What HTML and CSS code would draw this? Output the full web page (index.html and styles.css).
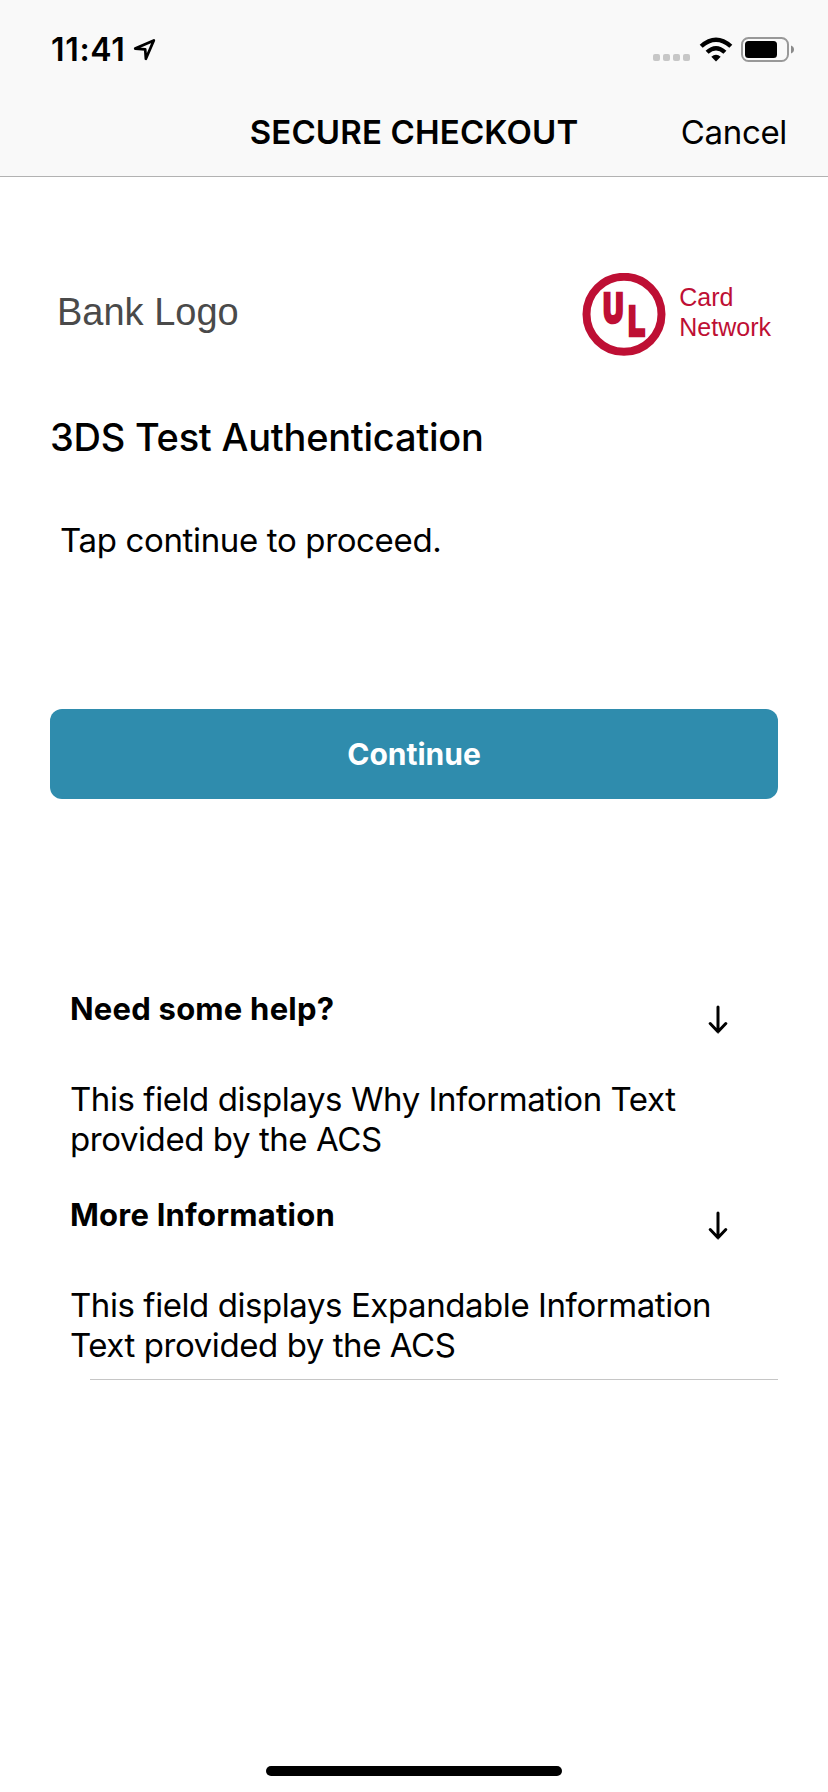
FILE: index.html
```html
<!DOCTYPE html>
<html lang="en">
<head>
<meta charset="utf-8">
<title>Secure Checkout</title>
<link rel="stylesheet" href="styles.css">
</head>
<body>
<div class="screen">
  <header class="header">
    <div class="status">
      <span class="time">11:41</span>
      <svg class="location" width="24" height="24" viewBox="0 0 24 24"><path d="M2.2 10.6 L20.8 2.4 L12.9 20.8 L12.2 11.4 Z" fill="none" stroke="#000" stroke-width="2.7" stroke-linejoin="round"/></svg>
      <div class="indicators">
        <div class="dots"><i class="dot"></i><i class="dot"></i><i class="dot"></i><i class="dot"></i></div>
        <svg class="wifi" width="34" height="25" viewBox="0 0 34 25"><path d="M17 24.4 L12.3 19.7 Q17 15.7 21.7 19.7 Z"/><path d="M6.6 13.8 L9.6 16.8 Q17 10.4 24.4 16.8 L27.4 13.8 Q17 4.4 6.6 13.8 Z"/><path d="M.7 7.8 L3.7 10.8 Q17 -1 30.3 10.8 L33.3 7.8 Q17 -6.6 .7 7.8 Z"/></svg>
        <svg class="battery" width="54" height="26" viewBox="0 0 54 26"><rect x="1" y="1" width="46" height="23" rx="6.5" fill="none" stroke="#999" stroke-width="2"/><rect x="4" y="4" width="32" height="17" rx="3.5"/><path d="M50 8.5 Q53 9.6 53 12.5 T50 16.5 Z" fill="#8b8b8b"/></svg>
      </div>
    </div>
    <div class="nav">
      <h1 class="title">SECURE CHECKOUT</h1>
      <a class="cancel">Cancel</a>
    </div>
  </header>
  <main class="content">
    <div class="brands">
      <div class="bank">Bank Logo</div>
      <div class="network">
        <svg class="ul" width="84" height="84" viewBox="0 0 84 84"><circle cx="42" cy="41.3" r="37.500" fill="none" stroke="#be0f34" stroke-width="8"/><text class="ul-letter" transform="translate(21.6 49.2) scale(.66 1)">U</text><text class="ul-letter" transform="translate(46.4 61.7) scale(.64 1)">L</text></svg>
        <div class="network-name">Card<br>Network</div>
      </div>
    </div>
    <h2 class="heading">3DS Test Authentication</h2>
    <p class="prompt">Tap continue to proceed.</p>
    <button class="continue">Continue</button>
    <section class="info">
      <div class="info-head"><h3 class="info-title">Need some help?</h3><svg class="arrow" width="20" height="30" viewBox="0 0 20 30"><path d="M10 2 V26.5 M2.2 18.5 L10 26.8 L17.8 18.5"/></svg></div>
      <p class="info-text">This field displays Why Information Text<br>provided by the ACS</p>
    </section>
    <section class="info">
      <div class="info-head"><h3 class="info-title">More Information</h3><svg class="arrow" width="20" height="30" viewBox="0 0 20 30"><path d="M10 2 V26.5 M2.2 18.5 L10 26.8 L17.8 18.5"/></svg></div>
      <p class="info-text">This field displays Expandable Information<br>Text provided by the ACS</p>
    </section>
    <hr class="divider">
  </main>
  <div class="home"></div>
</div>
</body>
</html>
```
FILE: styles.css
```css
* { box-sizing: border-box; margin: 0; padding: 0; }
body { background: #fff; color: #000; font-family: Inter, "Liberation Sans", sans-serif; }
.screen { display: flex; flex-direction: column; width: 828px; height: 1792px; }
.header { height: 177px; background: #f9f9f9; border-bottom: 1px solid #b2b2b2; }
.status { display: flex; align-items: flex-start; height: 112px; padding: 29px 33px 0 51px; }
.time { padding-top: 1px; font-size: 32px; font-weight: 600; line-height: 40px; letter-spacing: .7px; }
.location { margin: 9px 0 0 7px; }
.indicators { display: flex; margin-left: auto; }
.dots { display: flex; gap: 3px; margin: 25px 9px 0 0; }
.dot { width: 7px; height: 7px; border-radius: 2px; background: #c7c7c7; }
.wifi { margin: 8px 8px 0 0; }
.battery { margin-top: 8px; }
.nav { display: grid; grid-template-columns: 1fr auto 1fr; padding: 0 41px; line-height: 40px; font-size: 33px; }
.title { grid-column: 2; font-size: 33px; font-weight: 600; letter-spacing: .15px; }
.cancel { justify-self: end; letter-spacing: -.32px; }
.content { flex: 1; padding: 96px 50px 0; }
.brands { display: flex; justify-content: space-between; height: 84px; padding: 0 7px; font-family: "Liberation Sans", sans-serif; }
.bank { padding-top: 17px; font-size: 38px; line-height: 44px; color: #4a4a4a; }
.network { display: flex; gap: 13px; color: #be0f34; }
.network-name { padding-top: 9px; font-size: 25px; line-height: 30px; }
.ul-letter { font: bold 41px "Liberation Sans", sans-serif; fill: #be0f34; stroke: #be0f34; stroke-width: 4.5px; stroke-linejoin: miter; }
.heading { margin-top: 56px; font-size: 38px; font-weight: 500; line-height: 48px; letter-spacing: -.24px; }
.prompt { margin: 59px 0 0 10px; font-size: 33px; line-height: 40px; letter-spacing: -.35px; }
.continue { display: block; width: 100%; height: 90px; margin: 149px 0 189px; border: 0; border-radius: 12px; background: #2f8cad; color: #fff; font: 700 30px/40px Inter, "Liberation Sans", sans-serif; }
.info { height: 206px; padding: 0 50px 0 20px; }
.info-head { display: flex; justify-content: space-between; height: 91px; }
.info-title { padding-top: 1px; font-size: 31px; font-weight: 700; line-height: 40px; letter-spacing: .22px; }
.arrow { margin-top: 17px; fill: none; stroke: #000; stroke-width: 3px; stroke-linecap: round; stroke-linejoin: round; }
.info-text { font-size: 33px; line-height: 40px; letter-spacing: -.43px; white-space: nowrap; }
.divider { margin: -21px 0 0 40px; border: 0; border-top: 1px solid #c6c6c6; }
.home { width: 296px; height: 10px; margin: 0 auto 16px; border-radius: 5px; background: #000; }
```
